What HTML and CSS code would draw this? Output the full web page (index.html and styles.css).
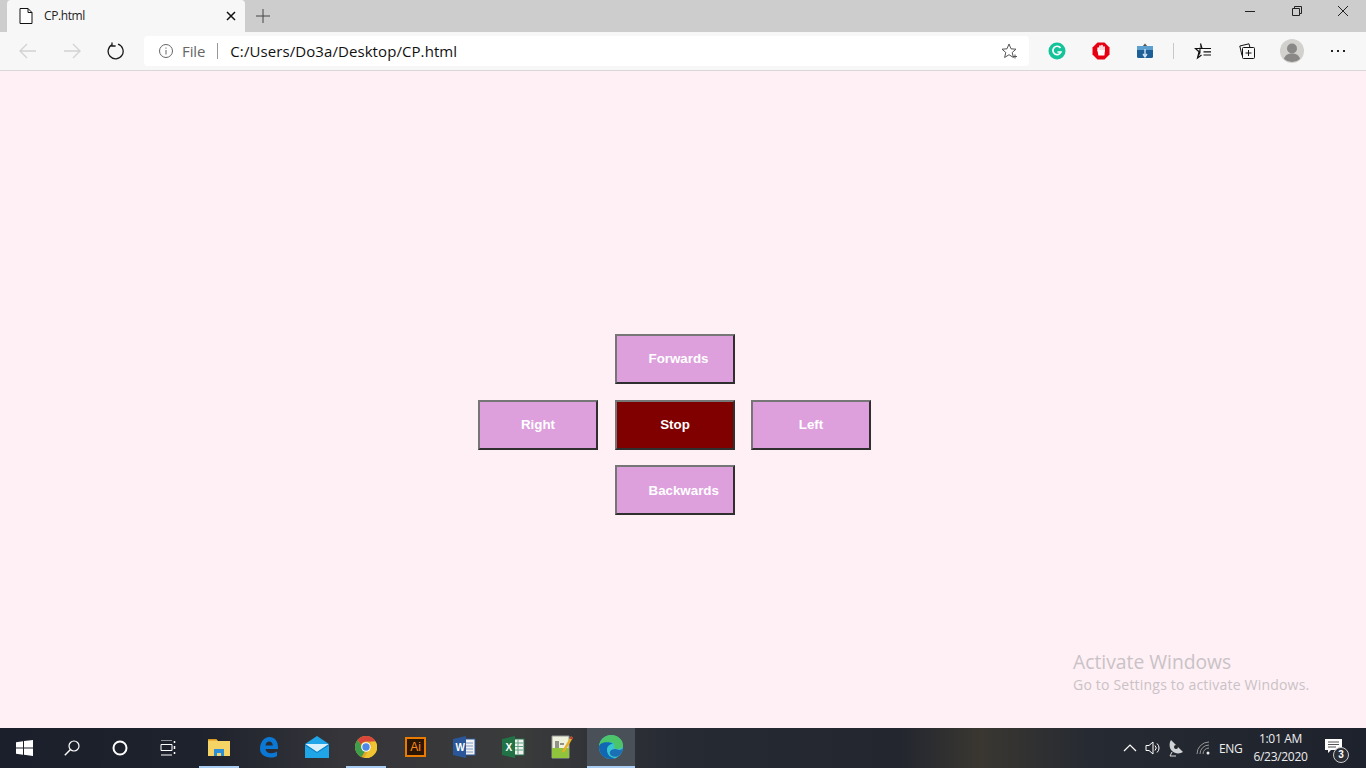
FILE: index.html
```html
<!DOCTYPE html>
<html lang="en">
<head>
<meta charset="utf-8">
<title>CP.html</title>
<link rel="stylesheet" href="styles.css">
</head>
<body>
<div class="screen">
  <header class="tabstrip">
    <div class="tab">
      <svg class="tab-doc" width="14" height="16" viewBox="0 0 14 16"><path d="M1 .5h8l4 4v11H1zM9 .5v4h4" fill="#fff" stroke="#111" stroke-width="1"/></svg>
      <span class="tab-title">CP.html</span>
      <svg class="tab-close" width="10" height="10" viewBox="0 0 10 10"><path d="M1 1l8 8M9 1l-8 8" stroke="#111" stroke-width="1.5"/></svg>
    </div>
    <svg class="new-tab" width="14" height="14" viewBox="0 0 14 14"><path d="M7 0v14M0 7h14" stroke="#444" stroke-width="1"/></svg>
    <div class="win-controls">
      <svg width="10" height="10" viewBox="0 0 10 10"><path d="M0 5.5h10" stroke="#222"/></svg>
      <svg class="win-restore" width="10" height="10" viewBox="0 0 10 10"><path d="M.5 2.500h7v7h-7zM2.500 2.500v-2h7v7h-2" fill="none" stroke="#222"/></svg>
      <svg width="12" height="12" viewBox="0 0 12 12"><path d="M1 1l10 10M11 1L1 11" stroke="#222"/></svg>
    </div>
  </header>

  <nav class="toolbar">
    <div class="nav-buttons">
      <svg width="18" height="16" viewBox="0 0 18 16"><path d="M17 8H1M8 1L1 8l7 7" fill="none" stroke="#d2d2d2" stroke-width="1.300"/></svg>
      <svg width="18" height="16" viewBox="0 0 18 16"><path d="M1 8h16M10 1l7 7-7 7" fill="none" stroke="#d2d2d2" stroke-width="1.300"/></svg>
      <svg width="18" height="18" viewBox="0 0 18 18"><path d="M11 2.200A7.500 7.500 0 1 1 5.300 2.600M5 .5v3.500h3.600" fill="none" stroke="#1a1a1a" stroke-width="1.300"/></svg>
    </div>
    <div class="address">
      <svg class="info" width="16" height="16" viewBox="0 0 16 16"><circle cx="8" cy="8" r="6.500" fill="none" stroke="#666"/><path d="M8 7v4.500M8 4.500v1.200" stroke="#666"/></svg>
      <span class="scheme">File</span>
      <span class="sep"></span>
      <span class="url">C:/Users/Do3a/Desktop/CP.html</span>
      <svg class="fav" width="16" height="16" viewBox="0 0 16 16"><path d="M8 1l2 4.800 5 .4-3.800 3.300 1.200 5L8 11.700 3.600 14.500l1.200-5L1 6.200l5-.4z" fill="none" stroke="#555"/><path d="M12 13.500h4M14 11.500v4" stroke="#555"/></svg>
    </div>
    <div class="extensions">
      <span class="ext"><svg width="18" height="18" viewBox="0 0 18 18"><circle cx="9" cy="9" r="8.500" fill="#15c39a"/><path d="M12.500 6A4.200 4.200 0 1 0 13 10H9.500" fill="none" stroke="#fff" stroke-width="1.700"/></svg></span>
      <span class="ext"><svg width="18" height="18" viewBox="0 0 18 18"><path d="M5.500.5h7l5 5v7l-5 5h-7l-5-5v-7z" fill="#e60012"/><path d="M6.200 8.500V6M8 9V4M10 9V3.500M12 9V5" stroke="#fff" stroke-width="1.700" stroke-linecap="round"/><path d="M5.400 8l1 5.500h6L13 8z" fill="#fff"/></svg></span>
      <span class="ext"><svg width="18" height="16" viewBox="0 0 18 16"><path d="M6.500 3.500L9 .5l2.500 3z" fill="#555"/><rect x="1" y="3" width="16" height="12" rx="1.500" fill="#1d5f96"/><rect x="1" y="3" width="16" height="4" fill="#5da0d0"/><path d="M9 6v8M7 11l2 3 2-3" stroke="#cfe3f2" fill="none" stroke-width="1.400"/></svg></span>
      <span class="ext-sep"></span>
      <span class="ext"><svg width="18" height="18" viewBox="0 0 18 18"><path d="M6.500 1.500L8 6.500H1.500L5 9.800 3.500 16l4-3" fill="none" stroke="#111" stroke-width="1.200"/><path d="M8 6.500h9M9.500 9.800h7.500M9.500 13h7.500" stroke="#111" stroke-width="1.200"/><path d="M6.500 1.500V11l-3 5 1.500-6z" fill="#111"/></svg></span>
      <span class="ext"><svg width="16" height="16" viewBox="0 0 16 16"><path d="M3 12.500L.8 3 10 .8l.8 3.200" fill="none" stroke="#111"/><rect x="3.500" y="4.500" width="12" height="11" rx="1" fill="#f7f7f7" stroke="#111"/><path d="M9.500 7v6M6.500 10h6" stroke="#111"/></svg></span>
      <span class="ext ext-avatar"><svg class="avatar" width="24" height="24" viewBox="0 0 24 24"><circle cx="12" cy="12" r="12" fill="#d3d1ce"/><circle cx="12" cy="9.500" r="5" fill="#8a8886"/><path d="M4 20c1-4 4-5.500 8-5.500s7 1.500 8 5.500a12 12 0 0 1-16 0z" fill="#8a8886"/></svg></span>
      <span class="more"><i></i><i></i><i></i></span>
    </div>
  </nav>

  <main class="page">
    <div class="pad">
      <button class="btn btn-forwards btn-start" type="button">Forwards</button>
      <button class="btn btn-right" type="button">Right</button>
      <button class="btn btn-stop" type="button">Stop</button>
      <button class="btn btn-left" type="button">Left</button>
      <button class="btn btn-backwards btn-start" type="button">Backwards</button>
    </div>
    <div class="activate">
      <div class="activate-title">Activate Windows</div>
      <div class="activate-sub">Go to Settings to activate Windows.</div>
    </div>
  </main>

  <footer class="taskbar">
    <span class="tb-sys"><svg width="17" height="16" viewBox="0 0 17 16"><path d="M0 2.300l7-1V7.500H0zM8 1.100L17 0v7.500H8zM0 8.500h7v6.200l-7-1zM8 8.500h9V16l-9-1.200z" fill="#fff"/></svg></span>
    <span class="tb-sys"><svg width="16" height="16" viewBox="0 0 16 16"><circle cx="10" cy="6" r="5" fill="none" stroke="#fff" stroke-width="1.200"/><path d="M6.500 9.500L.8 15.300" stroke="#fff" stroke-width="1.400"/></svg></span>
    <span class="tb-sys"><svg width="16" height="16" viewBox="0 0 16 16"><circle cx="8" cy="8" r="6.500" fill="none" stroke="#fff" stroke-width="2"/></svg></span>
    <span class="tb-sys"><svg width="16" height="16" viewBox="0 0 16 16"><path d="M1 0h11M1 15h11M1 4.500h11v6H1z" fill="none" stroke="#fff"/><path d="M14.500 1v2M14.500 6v3M14.500 12v2" stroke="#fff" stroke-width="1.500"/></svg></span>
    <span class="tb-app running"><svg width="22" height="18" viewBox="0 0 22 18"><path d="M0 1h8l2 2h12v15H0z" fill="#f6d365"/><path d="M0 1h8l1 1.500H0z" fill="#d99a1c"/><path d="M6 18v-7h10v7h-3v-3H9v3z" fill="#2a8fd8"/></svg></span>
    <span class="tb-app"><svg width="20" height="22" viewBox="0 0 20 22"><path d="M2 13C2 6 6 1 11.500 1 16.500 1 20 5 20 11.500v1.500H7.500c.3 3 2.700 4.300 5.500 4.300 2.400 0 4.500-.7 6-1.700v4.400c-1.700 1-4 1.500-6.500 1.500C6.300 21 2 18 2 13zm5.500-3.500h7.300C14.700 7 13.200 5.500 11.200 5.500S7.800 7 7.500 9.500z" fill="#0a78d4"/></svg></span>
    <span class="tb-app"><svg width="24" height="22" viewBox="0 0 24 22"><path d="M0 8l12-8 12 8v14H0z" fill="#1fa5e8"/><path d="M0 8h24l-12 8z" fill="#d8f0fb"/><path d="M0 8l12 8 12-8v1.500L12 17 0 9.500z" fill="#0d7fc0"/></svg></span>
    <span class="tb-app running"><svg width="22" height="22" viewBox="0 0 22 22"><circle cx="11" cy="11" r="11" fill="#e0a92a"/><path d="M11 0a11 11 0 0 1 9.500 5.500H11a5.500 5.500 0 0 0-5 3.200L2.600 3.900A11 11 0 0 1 11 0z" fill="#d9463c"/><path d="M2.600 3.900A11 11 0 0 0 6.500 21l4-6.500a5 5 0 0 1-4.500-5.800z" fill="#3f9e4c"/><path d="M20.500 5.500A11 11 0 0 1 9 22l4.500-7.500A5.500 5.500 0 0 0 15 6z" fill="#f0c330"/><circle cx="11" cy="11" r="4.800" fill="#fff"/><circle cx="11" cy="11" r="3.700" fill="#4f88e6"/></svg></span>
    <span class="tb-app tb-app-odd"><span class="ai">Ai</span></span>
    <span class="tb-app tb-app-odd"><svg width="23" height="22" viewBox="0 0 23 22"><rect x="9" y="3" width="13" height="16" fill="#f2f2f2" stroke="#2b5797"/><path d="M13 7h7M13 10h7M13 13h7M13 16h7" stroke="#7d9ac9"/><path d="M0 3l13-3v22L0 19z" fill="#2b579a"/><text x="2.500" y="15" class="doc-letter">W</text></svg></span>
    <span class="tb-app tb-app-odd"><svg width="23" height="22" viewBox="0 0 23 22"><rect x="9" y="3" width="13" height="16" fill="#f2f2f2" stroke="#217346"/><path d="M13 7h8M13 10.500h8M13 14h8M16 4v14" stroke="#60a37f"/><path d="M0 3l13-3v22L0 19z" fill="#217346"/><text x="3.500" y="15" class="doc-letter">X</text></svg></span>
    <span class="tb-app"><svg width="22" height="24" viewBox="0 0 22 24"><path d="M1 1h17v22H1z" fill="#eef2dc" stroke="#999"/><path d="M1 13h17v10H1z" fill="#8fc43c"/><path d="M5 6v7M7 6v7M9 9h4" stroke="#333"/><path d="M21 2L12 17" stroke="#e6b02a" stroke-width="2.500"/><path d="M21 2l-1 2" stroke="#b33" stroke-width="2.500"/></svg></span>
    <span class="tb-app active"><svg width="24" height="24" viewBox="0 0 24 24"><circle cx="12" cy="12" r="12" fill="#37c6d0"/><path d="M24 13a12 12 0 0 1-3 7c-3 3-9 2-10-1-1-2 1-5 5-5 3 0 4 2 7 0z" fill="#1b6fb5"/><path d="M0 12C0 5 6 0 12 0c7 0 12 5 12 10 0 3-3 4-6 4-2 0-3-1-3-2 1-2 0-5-4-5C5 7 0 11 0 12z" fill="#4cc46a"/><path d="M0 12c0 7 5 12 12 12 2 0 3-.3 4-1-4 0-8-3-8-8 0-4 3-6 6-6.500C9 6 0 7 0 12z" fill="#1167b1"/></svg></span>
    <div class="tray">
      <svg width="14" height="8" viewBox="0 0 14 8"><path d="M1 7l6-6 6 6" fill="none" stroke="#fff" stroke-width="1.200"/></svg>
      <svg class="tray-vol" width="16" height="14" viewBox="0 0 16 14"><path d="M1 4.500h3L8 1v12L4 9.500H1z" fill="none" stroke="#fff"/><path d="M10 4.500a3.500 3.500 0 0 1 0 5M12 2.500a6 6 0 0 1 0 9" fill="none" stroke="#fff"/></svg>
      <svg class="tray-net" width="17" height="18" viewBox="0 0 17 18"><path d="M3 1l12 12c-3 2-8 2-11-1S1 4 3 1z" fill="#cfd3d6"/><circle cx="8" cy="8" r="2" fill="#222"/><path d="M4 13l-2 4h6" stroke="#ddd" fill="none"/></svg>
      <svg class="tray-wifi" width="16" height="14" viewBox="0 0 16 14"><path d="M1 13A12 12 0 0 1 13 1M4 13a9 9 0 0 1 9-9M7 13a6 6 0 0 1 6-6" fill="none" stroke="#999"/><circle cx="12" cy="12" r="1.500" fill="#eee"/></svg>
      <span class="tray-lang">ENG</span>
      <span class="clock"><span>1:01 AM</span><span>6/23/2020</span></span>
      <span class="notif">
        <svg width="17" height="14" viewBox="0 0 17 14"><path d="M0 0h17v11H6l-3 3v-3H0z" fill="#fff"/><path d="M3 3h11M3 5.500h11M3 8h8" stroke="#555"/></svg>
        <span class="notif-badge">3</span>
      </span>
    </div>
  </footer>
</div>
</body>
</html>
```

FILE: styles.css
```css
* { box-sizing: border-box; }
html, body { margin: 0; padding: 0; height: 100%; overflow: hidden; }
body { font-family: "Liberation Sans", Arial, sans-serif; }

.screen { display: flex; flex-direction: column; width: 1366px; height: 768px; }

/* tab strip */
.tabstrip { display: flex; align-items: flex-end; height: 32px; background: #cdcdcd; padding-left: 7px; flex: none; }
.tab { display: flex; align-items: center; width: 238px; height: 32px; background: #f7f7f7; border-radius: 4px 4px 0 0; padding: 0 7px 1px 12px; }
.tab-doc { flex: none; }
.tab-title { font: 12px "Open Sans", sans-serif; color: #222; margin-left: 11px; flex: 1; letter-spacing: -.4px; }
.tab-close { flex: none; margin-right: 2px; }
.new-tab { margin: 0 0 9px 11px; flex: none; }
.win-controls { display: flex; align-items: center; margin-left: auto; height: 32px; padding-bottom: 10px; gap: 36px; padding-right: 17px; }
.win-restore { margin: 0 -1px 0 1px; }

/* toolbar */
.toolbar { display: flex; align-items: center; height: 39px; background: #f7f7f7; border-bottom: 1px solid #dcd6d8; flex: none; padding-bottom: 1px; }
.nav-buttons { display: flex; align-items: center; gap: 26px; width: 144px; padding-left: 19px; flex: none; }
.address { display: flex; align-items: center; width: 885px; height: 30px; background: #fff; border-radius: 4px; padding: 0 12px 0 14px; flex: none; }
.info { flex: none; }
.scheme { font: 15px "Open Sans", sans-serif; color: #666; margin-left: 8px; letter-spacing: -.1px; }
.sep { width: 1px; height: 16px; background: #999; margin: 0 12px; }
.url { font: 15px "Open Sans", sans-serif; color: #111; flex: 1; letter-spacing: .08px; }
.fav { flex: none; }
.extensions { display: flex; align-items: center; flex: 1; padding-left: 6px; }
.ext { display: flex; align-items: center; justify-content: center; width: 44px; height: 30px; flex: none; }
.ext-avatar { padding-left: 2px; }
.ext-sep { width: 1px; height: 16px; background: #c8c8c8; margin: 0 7px 0 6px; flex: none; }
.avatar { display: block; }
.more { display: flex; gap: 4px; margin-left: 18px; }
.more i { width: 2px; height: 2px; background: #222; display: block; }

/* page */
.page { position: relative; flex: 1; display: flex; justify-content: center; background: #fff0f5; padding-top: 263px; }
.pad { display: grid; grid-template-columns: 137px 136px 120px; grid-template-rows: 66px 65px 50px; margin-left: -17px; }
.btn { width: 120px; height: 50px; padding: 0 0 2px; font: bold 13.333px "Liberation Sans", Arial, sans-serif; color: #fff; background: #dda0dd; border-width: 2px; border-style: solid; border-color: #767676 #2f2f2f #2f2f2f #767676; text-align: center; }
.btn-start { text-align: left; padding-left: 31.500px; }
.btn-forwards { grid-column: 2; grid-row: 1; }
.btn-right { grid-column: 1; grid-row: 2; }
.btn-stop { grid-column: 2; grid-row: 2; background: #800000; }
.btn-left { grid-column: 3; grid-row: 2; }
.btn-backwards { grid-column: 2; grid-row: 3; padding-bottom: 0; }

.activate { position: absolute; left: 1073px; top: 578px; color: #c9c2c6; font-family: "Open Sans", sans-serif; white-space: nowrap; }
.activate-title { font-size: 19.300px; line-height: 26px; }
.activate-sub { font-size: 14px; line-height: 20px; letter-spacing: .2px; }

/* taskbar */
.taskbar { display: flex; align-items: stretch; height: 40px; flex: none; color: #fff; background: linear-gradient(90deg, #1b1f2b 0, #1e222c 200px, #35353a 340px, #3a3b3b 520px, #262a33 680px, #23262f 900px, #3a3731 980px, #262a32 1090px, #1e222c 100%); }
.tb-sys { display: flex; align-items: center; justify-content: center; width: 48px; flex: none; padding-bottom: 1px; }
.tb-sys:nth-child(4) { margin-right: 3px; }
.tb-app { display: flex; align-items: center; justify-content: center; width: 49px; flex: none; position: relative; padding: 0 2px 2px 0; }
.tb-app-odd { padding-right: 0; }
.tb-app.running::after { content: ""; position: absolute; left: 4px; right: 5px; bottom: 0; height: 2px; background: #a9cdf2; }
.tb-app.active { background: #4a5057; width: 48px; padding-right: 0; }
.tb-app.active::after { content: ""; position: absolute; left: 0; right: 0; bottom: 0; height: 2px; background: #a9cdf2; }
.ai { display: flex; align-items: center; justify-content: center; width: 21px; height: 20px; background: #2b1603; border: 2px solid #e87b00; color: #ff8a1a; font: 12px "Liberation Sans", sans-serif; }
.doc-letter { font: bold 10px "Liberation Sans", sans-serif; fill: #fff; }

.tray { display: flex; align-items: center; margin-left: auto; height: 100%; }
.tray > svg { flex: none; }
.tray-vol { margin-left: 8px; }
.tray-net { margin-left: 7px; }
.tray-wifi { margin-left: 11px; }
.tray-lang { font: 12px "Open Sans", sans-serif; margin-left: 7px; color: #eee; width: 28px; letter-spacing: -.3px; }
.clock { display: flex; flex-direction: column; align-items: center; font: 12px/18px "Open Sans", sans-serif; width: 67px; color: #eee; letter-spacing: -.3px; white-space: nowrap; }
.notif { position: relative; display: flex; align-items: center; justify-content: center; width: 52px; height: 100%; padding: 0 14px 4px 0; }
.notif-badge { position: absolute; left: 19px; top: 19px; width: 16px; height: 16px; border-radius: 50%; background: #2c2f36; border: 1px solid #ccc; font: bold 10px/14px "Liberation Sans", sans-serif; text-align: center; color: #fff; }
```
